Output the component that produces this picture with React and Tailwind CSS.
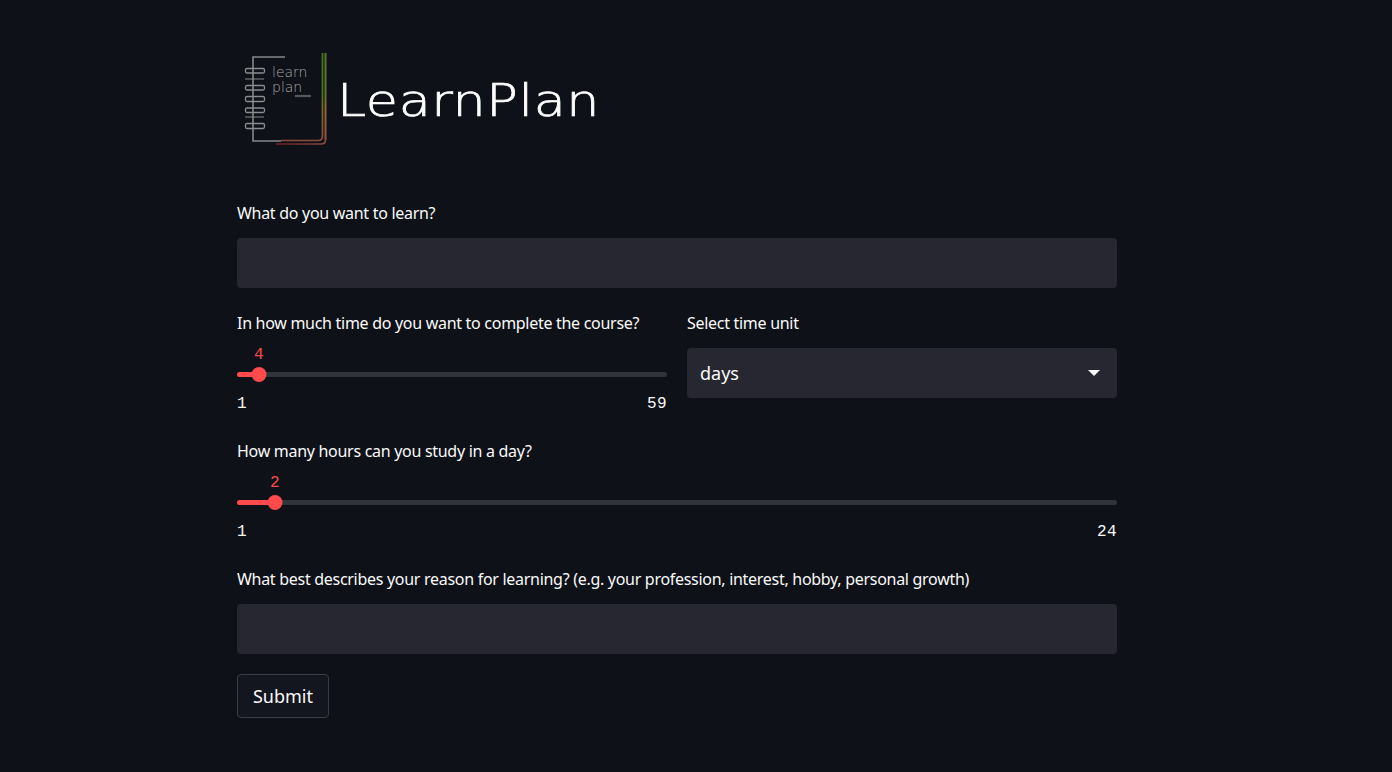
import React from 'react';

const sans = { fontFamily: '"Noto Sans", sans-serif' };

const Label = ({ children }) => (
  <div className="h-[25px] text-[16px] leading-[25px] tracking-[-0.29px] text-[#fafafa] whitespace-nowrap">
    {children}
  </div>
);

const TextBox = () => <div className="mt-[12px] h-[50px] rounded-[4px] bg-[#262730]" />;

const Slider = ({ value, min, max, pos }) => (
  <div className="font-['Liberation_Mono',monospace] text-[16px] tracking-[0.4px]">
    <div className="relative h-[55px]">
      <div className="absolute left-0 right-0 top-[36px] h-[5px] rounded-full bg-[#31333b]" />
      <div className="absolute left-0 top-[36px] h-[5px] rounded-l-full bg-[#ff4b4b]" style={{ width: pos }} />
      <div className="absolute top-[31px] h-[15px] w-[15px] -translate-x-1/2 rounded-full bg-[#ff4b4b]" style={{ left: pos }} />
      <div className="absolute top-[11px] -translate-x-1/2 leading-[16px] text-[#ff4b4b]" style={{ left: pos }}>{value}</div>
    </div>
    <div className="flex h-[22px] items-center justify-between pt-[3px] text-[#fafafa]">
      <span>{min}</span>
      <span>{max}</span>
    </div>
  </div>
);

const Logo = () => (
  <div className="flex h-[120px] items-start">
    <svg width="100" height="120" viewBox="0 0 100 120" fill="none" className="shrink-0">
      <defs>
        <linearGradient id="edge" x1="0" y1="13" x2="0" y2="104" gradientUnits="userSpaceOnUse">
          <stop offset="0" stopColor="#3f7d22" />
          <stop offset="0.45" stopColor="#4a7a25" />
          <stop offset="0.6" stopColor="#86692f" />
          <stop offset="1" stopColor="#8d4a3e" />
        </linearGradient>
        <linearGradient id="base" x1="39" y1="0" x2="89" y2="0" gradientUnits="userSpaceOnUse">
          <stop offset="0" stopColor="#6e1f22" />
          <stop offset="0.5" stopColor="#7a3030" />
          <stop offset="1" stopColor="#8d4a3e" />
        </linearGradient>
      </defs>
      <path d="M48 17H16V101H44" stroke="#85878a" strokeWidth="1.6" />
      <g stroke="#8a8c8f" strokeWidth="1.3">
        <rect x="8.5" y="28.5" width="19" height="4.5" rx="1.5" />
        <rect x="8.5" y="45.5" width="19" height="4.5" rx="1.5" />
        <rect x="8.5" y="56.5" width="19" height="5" rx="1.5" />
        <rect x="8.5" y="68" width="19" height="4.5" rx="1.5" />
        <rect x="8.5" y="83.5" width="19" height="5" rx="1.5" />
      </g>
      <path d="M8 39H27M8 77H27" stroke="#85878a" strokeWidth="1.2" />
      <path d="M85.5 13V96Q85.5 100.500 81 100.500H44" stroke="url(#edge)" strokeWidth="1.7" />
      <path d="M88.500 13V100Q88.500 104 84 104H39" stroke="url(#base)" strokeWidth="1.7" />
      <path d="M88.500 13V100" stroke="url(#edge)" strokeWidth="1.7" />
      <path d="M58 56H74" stroke="#55575a" strokeWidth="2.2" />
      <text x="35" y="37" fill="#a4a6a8" fontSize="14" fontFamily="'DejaVu Sans', sans-serif" fontWeight="200">learn</text>
      <text x="35" y="52" fill="#a4a6a8" fontSize="14" fontFamily="'DejaVu Sans', sans-serif" fontWeight="200">plan</text>
    </svg>
    <div className="mt-[29px] origin-left scale-x-[1.19] text-[44px] leading-[64px] font-extralight tracking-[0.5px] text-white [-webkit-text-stroke:0.7px_white] font-['DejaVu_Sans',sans-serif] whitespace-nowrap">
      LearnPlan
    </div>
  </div>
);

export default function App() {
  return (
    <div className="min-h-[772px] bg-[#0e1117] pl-[237px] pt-[40px]" style={sans}>
      <div className="w-[880px]">
        <Logo />
        <div className="mt-[41px]">
          <Label>What do you want to learn?</Label>
          <TextBox />
        </div>
        <div className="mt-[23px] flex gap-[20px]">
          <div className="w-[430px]">
            <Label>In how much time do you want to complete the course?</Label>
            <Slider value="4" min="1" max="59" pos="22px" />
          </div>
          <div className="w-[430px]">
            <Label>Select time unit</Label>
            <div className="mt-[12px] flex h-[50px] items-center justify-between rounded-[4px] bg-[#262730] pl-[13px] pr-[17px] text-[18px] text-[#fafafa]">
              <span>days</span>
              <svg width="12" height="6" viewBox="0 0 12 6"><path d="M0 0H12L6 6Z" fill="#fafafa" /></svg>
            </div>
          </div>
        </div>
        <div className="mt-[26px]">
          <Label>How many hours can you study in a day?</Label>
          <Slider value="2" min="1" max="24" pos="38px" />
        </div>
        <div className="mt-[26px]">
          <Label>What best describes your reason for learning? (e.g. your profession, interest, hobby, personal growth)</Label>
          <TextBox />
        </div>
        <button className="mt-[20px] h-[44px] w-[92px] rounded-[4px] border border-[#3a3c44] bg-[#13161e] text-[18px] text-[#fafafa]">
          Submit
        </button>
      </div>
    </div>
  );
}
